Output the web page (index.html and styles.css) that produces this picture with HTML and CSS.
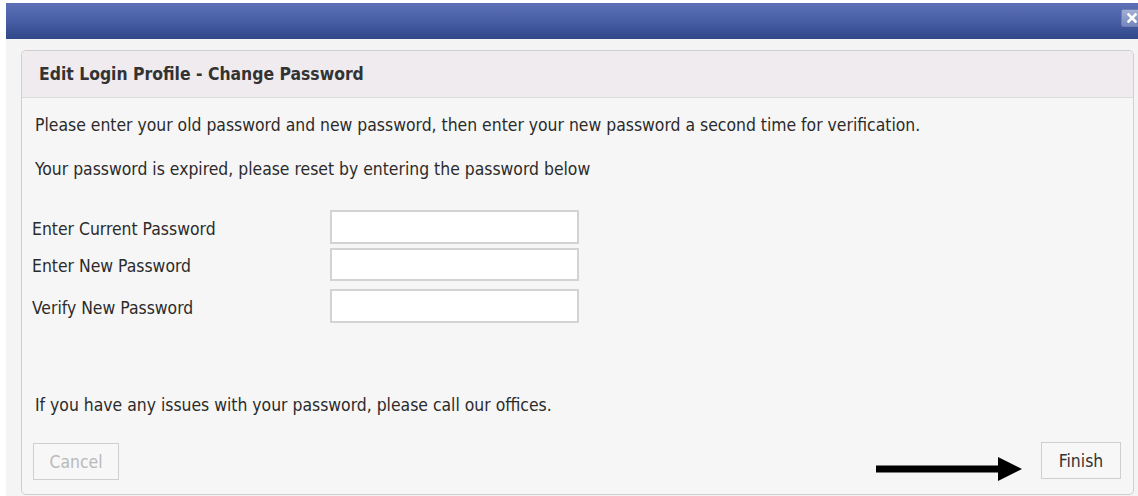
FILE: index.html
```html
<!DOCTYPE html>
<html lang="en">
<head>
<meta charset="utf-8">
<title>Edit Login Profile - Change Password</title>
<link rel="stylesheet" href="styles.css">
</head>
<body>
<div class="dialog">
  <div class="titlebar">
    <button class="close" type="button" aria-label="Close">
      <svg viewBox="0 0 10 10" width="10" height="10"><path d="M1.5 1.5 L8.5 8.5 M8.5 1.5 L1.5 8.5" stroke="#fff" stroke-width="2.6" stroke-linecap="square"/></svg>
    </button>
  </div>
  <div class="panel">
    <div class="panel-head">Edit Login Profile - Change Password</div>
    <div class="panel-body">
      <p class="intro">Please enter your old password and new password, then enter your new password a second time for verification.</p>
      <p class="notice">Your password is expired, please reset by entering the password below</p>
      <form class="pw-form">
        <label class="row r1"><span>Enter Current Password</span><input type="password"></label>
        <label class="row r2"><span>Enter New Password</span><input type="password"></label>
        <label class="row r3"><span>Verify New Password</span><input type="password"></label>
      </form>
      <p class="help">If you have any issues with your password, please call our offices.</p>
      <div class="actions">
        <button class="btn" type="button" disabled>Cancel</button>
        <div class="finish-wrap">
          <svg class="arrow" viewBox="0 0 146 24" width="146" height="24"><rect x="0" y="8.5" width="126" height="7" fill="#000"/><polygon points="122,0 146,12 122,24" fill="#000"/></svg>
          <button class="btn" type="button">Finish</button>
        </div>
      </div>
    </div>
  </div>
</div>
</body>
</html>
```
FILE: styles.css
```css
html, body {
  margin: 0;
  padding: 0;
}

body {
  background: #ffffff;
  font-family: "DejaVu Sans Condensed", "DejaVu Sans", sans-serif;
  font-stretch: condensed;
  font-size: 17.4px;
  color: #2b2b2b;
  width: 1138px;
  height: 496px;
  overflow: hidden;
}

.dialog {
  margin: 3px 0 0 6px;
  background: #f4f4f4;
  height: 493px;
  display: flex;
  flex-direction: column;
}

.titlebar {
  height: 36px;
  flex: none;
  background: linear-gradient(#5c70b6, #4a60a8 45%, #2f4888);
  display: flex;
  justify-content: flex-end;
  align-items: flex-start;
  overflow: hidden;
}

.close {
  margin: 6px -4px 0 0;
  width: 21px;
  height: 18px;
  padding: 0;
  border: 1px solid #6e7fb4;
  border-radius: 2px;
  background: linear-gradient(#a3b0d4, #7587bd);
  display: flex;
  align-items: center;
  justify-content: center;
}

.panel {
  margin: 11px 4px 1px 15px;
  flex: 1;
  border: 1px solid #cfcfcf;
  border-radius: 5px;
  background: #f6f6f6;
  display: flex;
  flex-direction: column;
}

.panel-head {
  height: 46px;
  flex: none;
  background: #efebee;
  border-bottom: 1px solid #dcdcdc;
  border-radius: 5px 5px 0 0;
  padding-left: 17px;
  display: flex;
  align-items: center;
  font-weight: bold;
  color: #333;
}

.panel-body {
  padding: 0 12px 0 13px;
  display: flex;
  flex-direction: column;
}

.panel-body p {
  margin: 0;
  line-height: 20px;
}

.intro {
  margin-top: 17px !important;
}

.notice {
  margin-top: 24px !important;
}

.pw-form {
  margin: 31px 0 0 -3px;
  display: flex;
  flex-direction: column;
}

.row {
  display: flex;
  align-items: center;
}

.row span {
  width: 298px;
  padding-top: 3px;
  color: #2b2b2b;
}

.row input {
  width: 249px;
  box-sizing: border-box;
  border: 2px solid #d3d3d3;
  background: #fff;
  margin: 0;
  padding: 0 4px;
  font: inherit;
}

.r1 input { height: 34px; }
.r2 { margin-top: 4px; }
.r2 input { height: 33px; }
.r3 { margin-top: 8px; }
.r3 input { height: 34px; }

.help {
  margin-top: 72px !important;
}

.actions {
  margin-top: 28px;
  display: flex;
  justify-content: space-between;
  align-items: flex-start;
}

.btn {
  font: inherit;
  height: 37px;
  padding: 0 15px;
  border: 1px solid #cfcfcf;
  background: #f7f7f7;
  color: #333;
}

.btn[disabled] {
  color: #b9b9b9;
  width: 86px;
  margin-left: -2px;
}

.finish-wrap {
  display: flex;
  align-items: flex-start;
  gap: 19px;
  margin-top: -1px;
}

.finish-wrap .btn {
  width: 80px;
  padding: 0;
}

.arrow {
  margin-top: 15px;
}
```
